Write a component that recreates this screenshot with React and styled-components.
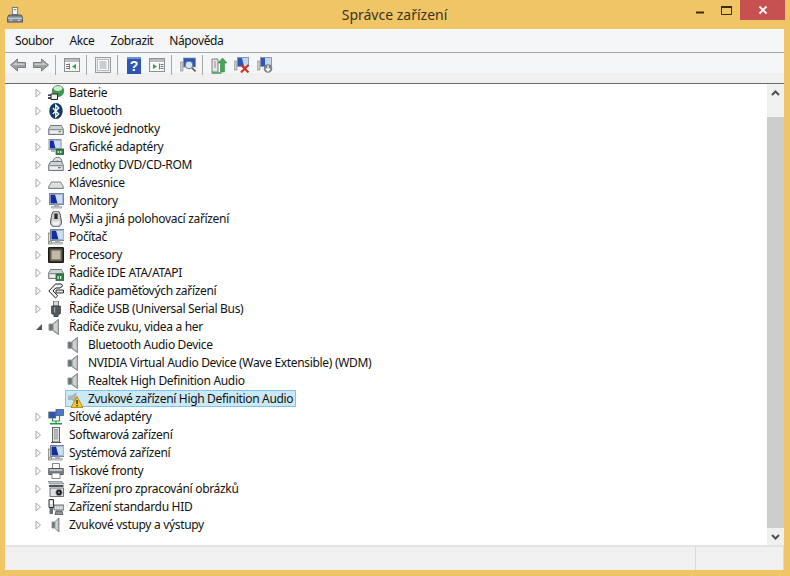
import React from "react";
import styled, { createGlobalStyle } from "styled-components";

const Global = createGlobalStyle`
  html, body { margin: 0; padding: 0; background: #f0c566; }
  * { box-sizing: border-box; }
`;

const Window = styled.div`
  width: 790px; height: 576px; background: #f0c566; display: flex; flex-direction: column;
  font-family: "Noto Sans", "Open Sans", sans-serif; font-size: 12px; color: #111; overflow: hidden;
`;
const TitleBar = styled.div`
  height: 29px; flex: none; display: flex; align-items: flex-start; padding: 0 5px 0 7px;
`;
const AppIcon = styled.div`width: 16px; height: 16px; margin-top: 7px; flex: none;`;
const Title = styled.div`
  flex: 1; text-align: center; font-size: 14px; line-height: 29px; color: #3c3320; padding-left: 79px;
`;
const WinButton = styled.div`
  flex: none; height: 20px; width: ${p => p.$w}px; background: ${p => p.$bg || "transparent"};
  display: flex; align-items: center; justify-content: center;
`;
const Body = styled.div`
  flex: 1; min-height: 0; margin: 0 6px 6px 5px; background: #f0f0f0; display: flex; flex-direction: column;
`;
const MenuBar = styled.div`
  height: 24px; flex: none; display: flex; align-items: center; padding: 0 10px; gap: 16px;
  background: #f5f6f7; border-bottom: 1px solid #a8a8a8; letter-spacing: -0.4px;
`;
const MenuItem = styled.span`line-height: 23px;`;
const Toolbar = styled.div`
  height: 31px; flex: none; display: flex; align-items: flex-start; padding: 3px 0 0 5px;
  background: linear-gradient(#f5f6f7 0 20px, #f0f0f0 20px);
  border-bottom: 1px solid #6a6a6a;
`;
const ToolIcon = styled.div`
  width: 16px; height: 18px; flex: none; margin-left: ${p => p.$ml || 0}px; display: flex; align-items: center;
`;
const ToolSep = styled.div`
  width: 1px; height: 20px; margin-top: -1px; background: #a9a9a9; flex: none; margin-left: ${p => p.$ml}px;
`;
const Content = styled.div`
  flex: 1; min-height: 0; display: flex; background: #fff; margin: 0 0 0 1px;
  border-bottom: 2px solid #e3e3e3;
`;
const Tree = styled.div`flex: 1; min-width: 0; display: flex; flex-direction: column;`;
const Row = styled.div`
  height: 18px; flex: none; display: flex; align-items: center; padding-left: ${p => p.$pad}px;
  white-space: nowrap;
`;
const Twisty = styled.div`width: 15px; height: 18px; flex: none; display: flex; align-items: center; justify-content: center; margin-right: 2px;`;
const NodeIcon = styled.div`width: 17px; height: 17px; flex: none; display: flex; align-items: center;`;
const Label = styled.div`
  margin-left: 3px; line-height: 16px; height: 17px; padding: 0 2px 0 1px; letter-spacing: -0.32px;
`;
const Selected = styled.div`
  display: flex; align-items: flex-start; height: 17px; align-self: flex-start; background: #cbe8f6; border: 1px solid #7fc4e4; padding-left: 1px;
`;
const Scrollbar = styled.div`
  width: 17px; flex: none; background: #f0f0f0; display: flex; flex-direction: column;
`;
const ScrollBtn = styled.div`height: 17px; flex: none; display: flex; align-items: center; justify-content: center;`;
const Track = styled.div`flex: 1; padding: 16px 0 0; display: flex;`;
const Thumb = styled.div`flex: 1; background: #cdcdcd;`;
const StatusBar = styled.div`height: 23px; flex: none; display: flex; background: #f0f0f0;`;
const StatusCell = styled.div`
  width: ${p => p.$w ? p.$w + "px" : "auto"}; flex: ${p => p.$w ? "none" : 1}; border-right: 1px solid #d9d9d9;
`;

const Svg = ({ s = 16, children }) => <svg width={s} height={s} viewBox={`0 0 ${s} ${s}`}>{children}</svg>;

const Speaker = () => <Svg>
  <path d="M1 5h3.500L10.500 .3v15.400L4.500 11.300H1z" fill="#a4a9a9" stroke="#6a7070" strokeWidth=".7"/>
  <path d="M1.500 5.500h3.200v5.300H1.500z" fill="#6a7074"/><path d="M6 5l3.500-2.700v11.400L6 11z" fill="#cdd1d1"/>
</Svg>;
const monitor = <>
  <rect x="1.500" y=".5" width="14" height="11" fill="#dfe4ea" stroke="#6f7a86" strokeWidth=".9"/>
  <path d="M2.500 1.500h12v9h-12z" fill="#12309a"/><path d="M7 1.500h7.500v9H9.500z" fill="#c9def4"/>
  <path d="M6 11.500h5v2H6z" fill="#aab0b6"/><path d="M3.500 13.500h10v1.600h-10z" fill="#cfd3d7" stroke="#7d8389" strokeWidth=".5"/>
</>;
const drive = <>
  <path d="M.7 8l2-3.500h10.600l2 3.500v5.500H.7z" fill="#cfd2d4" stroke="#666b6f" strokeWidth=".9"/>
  <path d="M1.500 8.500h13" stroke="#8b9094"/><path d="M2 10h12v2.500H2z" fill="#eceeef"/>
</>;
const icons = {
  battery: <Svg><ellipse cx="10" cy="6" rx="5.800" ry="5.500" fill="#3f9a50" stroke="#2d7b3f" strokeWidth=".7"/><ellipse cx="10" cy="3.500" rx="4.200" ry="2.400" fill="#d2ead3"/><path d="M3 9h6.500v5.500H3z" fill="#f0f0f0" stroke="#222" strokeWidth="1"/><path d="M0 10.200h3M0 13h3" stroke="#111" strokeWidth="1.300"/></Svg>,
  bt: <Svg><ellipse cx="8" cy="8" rx="6.700" ry="8" fill="#0f3a66"/><path d="M4.800 5l6 6-3 3V2l3 3-6 6" fill="none" stroke="#fff" strokeWidth="1.300"/></Svg>,
  disk: <Svg>{drive}<rect x="10.500" y="10" width="2.500" height="1.300" fill="#4e9a54"/></Svg>,
  gpu: <Svg><rect x="1" y="0.500" width="12" height="10" fill="#dfe4ea" stroke="#6f7a86" strokeWidth=".8"/><path d="M2 1.500h10v8H2z" fill="#12309a"/><path d="M5.500 1.500h6.500v8H7.500z" fill="#c9def4"/><path d="M3 11h4v2H3z" fill="#aab0b6"/><rect x="8" y="10" width="8" height="5.500" fill="#2f8248" stroke="#1e5732" strokeWidth=".7"/><path d="M9.500 12h1.400v2H9.500zM12 12h1.400v2H12z" fill="#d5ecd0"/></Svg>,
  dvd: <Svg><circle cx="9.500" cy="4.800" r="4.500" fill="#e0e3e6" stroke="#5f656b" strokeWidth=".9"/><circle cx="9.500" cy="4.800" r="1.200" fill="#fff" stroke="#5f656b" strokeWidth=".6"/>{drive}<rect x="10" y="10" width="3" height="1.300" fill="#7a8086"/></Svg>,
  kbd: <Svg><path d="M.7 11.500l2.800-4.500h9l2.800 4.500v2H.7z" fill="#c9cccf" stroke="#666b6f" strokeWidth=".8"/><path d="M3.500 8.300h9M2.800 9.800h10.400M2 11.300h12" stroke="#fff" strokeWidth=".9" strokeDasharray="1 .6"/></Svg>,
  mon: <Svg>{monitor}</Svg>,
  mouse: <Svg><path d="M8 0C3 0 3.800 5 2.700 10c-.7 3.500 1.300 6 5.300 6s6-2.500 5.300-6C12.200 5 13 0 8 0z" fill="#cfcfcf" stroke="#333" strokeWidth=".9"/><path d="M6.300 2.500h3.400v5.500H6.300z" fill="#2e2e2e"/><path d="M4.500 9c1 2 6 2 7 0v4c-2 1.800-5 1.800-7 0z" fill="#f1f1f1"/></Svg>,
  pc: <Svg><rect x=".3" y="4" width="3" height="11" fill="#e4e4d8" stroke="#6a6a5e" strokeWidth=".7"/><rect x="1.200" y="12" width="1.200" height="1.500" fill="#3f9a50"/><g transform="translate(1 0)">{monitor}</g></Svg>,
  cpu: <Svg><rect x=".5" y=".5" width="15" height="15" rx=".5" fill="#3a352e" stroke="#1a1815"/><rect x="2.500" y="2.500" width="11" height="11" fill="#8e8675"/><path d="M4 4h8v8H4z" fill="#c2bba9"/></Svg>,
  ide: <Svg>{drive}<rect x="8" y="9" width="8" height="6.500" fill="#2f8248" stroke="#1e5732" strokeWidth=".7"/><path d="M9.500 11h1.300v3H9.500zM12 11h1.300v3H12z" fill="#d5ecd0"/></Svg>,
  mem: <Svg><path d="M7.500 1L.8 8l6.700 7 2.300-2.200L5 8l2.800-3H12l2.800-2.200-1.500-1.800z" fill="#eceef0" stroke="#222" strokeWidth="1"/><path d="M8 7h7.500v3H8z" fill="#d9dcdf" stroke="#222" strokeWidth=".9"/></Svg>,
  usb: <Svg><path d="M5.500 0h5v5h-5z" fill="#d8d8d8" stroke="#444" strokeWidth=".7"/><path d="M3.500 5h9v7.500L10 14v2H6v-2l-2.500-1.500z" fill="#53585d" stroke="#33373b" strokeWidth=".7"/><path d="M6 6h1.200v5.500H6z" fill="#9da3a8"/></Svg>,
  speaker: <Speaker />,
  warn: <Svg><g opacity=".8"><path d="M1 3.500h3.500L9.500 .3v11L4.500 8H1z" fill="#a4a9a9"/></g><path d="M10 4.500L16 15.500H4z" fill="#f7c82a" stroke="#a77a10" strokeWidth=".8"/><path d="M9.400 8h1.300v4H9.400zM9.400 13h1.300v1.400H9.400z" fill="#222"/></Svg>,
  net: <Svg><rect x=".8" y="3" width="7" height="6" fill="#2a55b8" stroke="#4d5d70" strokeWidth=".8"/><rect x="8" y=".5" width="7.500" height="6" fill="#4b77cf" stroke="#4d5d70" strokeWidth=".8"/><path d="M4.500 9v3h7V6.500M8 12v2" fill="none" stroke="#2f934a" strokeWidth="1.200"/><path d="M2 14.700h12" stroke="#2f934a" strokeWidth="1.600"/></Svg>,
  soft: <Svg><rect x="4.500" y=".5" width="7" height="14.500" fill="#e4e4e4" stroke="#555" strokeWidth=".9"/><rect x="6.500" y="2.500" width="3" height="9.500" fill="#b8bdc1" stroke="#7a7a7a" strokeWidth=".5"/><path d="M3 15.500h10" stroke="#555"/></Svg>,
  sys: <Svg><rect x=".3" y="4" width="3" height="11" fill="#e4e4d8" stroke="#6a6a5e" strokeWidth=".7"/><rect x="1.200" y="12" width="1.200" height="1.500" fill="#3f9a50"/><g transform="translate(1 0)">{monitor}</g></Svg>,
  print: <Svg><path d="M4.500 .5h7v5h-7z" fill="#fafafa" stroke="#666" strokeWidth=".8"/><path d="M.7 5.500h14.600v6H.7z" fill="#7c8289" stroke="#3f4449" strokeWidth=".8"/><path d="M1.500 6h13v2h-13z" fill="#bfc3c6"/><path d="M4 10h8v5.500H4z" fill="#fff" stroke="#666" strokeWidth=".8"/></Svg>,
  scan: <Svg><path d="M0 .5h14l2 2.500H2z" fill="#bcc1c5" stroke="#6a6f74" strokeWidth=".6"/><path d="M1 4h14.500v2H1z" fill="#4f545a"/><rect x="2" y="7" width="13.500" height="8.500" fill="#dfe1e3" stroke="#555" strokeWidth=".8"/><circle cx="11" cy="11.500" r="3.200" fill="#1a1a1a" stroke="#999" strokeWidth=".8"/><circle cx="11" cy="11.500" r="1" fill="#8aa"/></Svg>,
  hid: <Svg><path d="M1 .5h4.500v8H1z" fill="#d5d8dc" stroke="#2f3337"/><path d="M2 2h2.500v3H2z" fill="#fff"/><path d="M1.500 9h3.500v6H1.500z" fill="#6a7075"/><path d="M6 6h10v5H6z" fill="#bcc0c3" stroke="#555" strokeWidth=".8"/><path d="M7 8h8M7 9.800h8" stroke="#fff" strokeDasharray="1 .6"/><path d="M8 12h6l1 3.500H7z" fill="#8d9398" stroke="#444" strokeWidth=".7"/></Svg>,
  sound: <Svg><path d="M4 5h2.500L11 1v14l-4.500-4H4z" fill="#a4a9a9" stroke="#6a7070" strokeWidth=".7"/><path d="M7.500 4.500l2.200-1.800v10.600L7.500 11.500z" fill="#d0d4d4"/><path d="M4.500 5.500h2.200v5H4.500z" fill="#6a7074"/></Svg>,
};

const items = [
  ["Baterie", "battery"], ["Bluetooth", "bt"], ["Diskové jednotky", "disk"], ["Grafické adaptéry", "gpu"],
  ["Jednotky DVD/CD-ROM", "dvd"], ["Klávesnice", "kbd"], ["Monitory", "mon"], ["Myši a jiná polohovací zařízení", "mouse"],
  ["Počítač", "pc"], ["Procesory", "cpu"], ["Řadiče IDE ATA/ATAPI", "ide"], ["Řadiče paměťových zařízení", "mem"],
  ["Řadiče USB (Universal Serial Bus)", "usb"], ["Řadiče zvuku, videa a her", "speaker", "open"],
  ["Bluetooth Audio Device", "speaker", "child"], ["NVIDIA Virtual Audio Device (Wave Extensible) (WDM)", "speaker", "child"],
  ["Realtek High Definition Audio", "speaker", "child"], ["Zvukové zařízení High Definition Audio", "warn", "sel"],
  ["Síťové adaptéry", "net"], ["Softwarová zařízení", "soft"], ["Systémová zařízení", "sys"], ["Tiskové fronty", "print"],
  ["Zařízení pro zpracování obrázků", "scan"], ["Zařízení standardu HID", "hid"], ["Zvukové vstupy a výstupy", "sound"],
];

const Closed = () => <svg width="7" height="10" viewBox="0 0 7 10"><path d="M1 1l4.500 4L1 9z" fill="#fff" stroke="#a6a6a6"/></svg>;
const Open = () => <svg width="8" height="8" viewBox="0 0 8 8"><path d="M7 1v6H1z" fill="#555"/></svg>;

const Back = ({ flip }) => <svg width="16" height="14" viewBox="0 0 16 14" style={flip ? { transform: "scaleX(-1)" } : undefined}>
  <path d="M.5 7L7.500 1v3.500h8v5h-8V13z" fill="#9da19f" stroke="#797d7b"/><path d="M2.500 7l4-3.300v1.800h8v1.500z" fill="#c9ccca"/></svg>;
const Pane = ({ right }) => <svg width="16" height="14" viewBox="0 0 16 14">
  <rect x=".5" y=".5" width="15" height="13" fill="#f7f7f7" stroke="#8d9193"/><path d="M1 1h14v3H1z" fill="#b9bdbf"/>
  {right ? <><path d="M10.500 5.500v6M11.500 6.500h3M11.500 8.500h3M11.500 10.500h3" stroke="#777"/><path d="M4 6l4 2.500L4 11z" fill="#3f9b50"/></>
    : <><path d="M5.500 5.500v6M2 6.500h3M2 8.500h3M2 10.500h3" stroke="#777"/><path d="M12 6L8 8.500l4 2.500z" fill="#3f9b50"/></>}
</svg>;
const Props = () => <svg width="16" height="16" viewBox="0 0 16 16"><rect x=".5" y=".5" width="15" height="15" fill="#ececec" stroke="#9a9d9f"/><rect x="2.500" y="2.500" width="11" height="11" fill="#fafafa" stroke="#b8bbbd"/><path d="M4.500 5h7M4.500 7h7M4.500 9h7M4.500 11h7" stroke="#9aa0a5"/></svg>;
const Help = () => <svg width="14" height="17" viewBox="0 0 14 17"><rect width="14" height="17" fill="#2f55b0"/><path d="M0 0h14v2H0z" fill="#6d8fd8"/><text x="7" y="14" textAnchor="middle" fontSize="14" fontWeight="700" fontFamily="Liberation Sans" fill="#fff">?</text></svg>;
const Scan = () => <svg width="16" height="16" viewBox="0 0 16 16"><rect x="0" y="5" width="3" height="9" fill="#c9cbc9" stroke="#777" strokeWidth=".5"/><rect x="3.500" y="1" width="12" height="9" fill="#2c55b8" stroke="#8a93a0" strokeWidth=".7"/><circle cx="9" cy="8" r="3.800" fill="#d7e5f3" stroke="#6e7c89"/><path d="M12 11l3.500 3.500" stroke="#555" strokeWidth="1.600"/></svg>;
const Update = () => <svg width="16" height="17" viewBox="0 0 16 17"><path d="M1 2h6v13H1z" fill="#e5e5e5" stroke="#666" strokeWidth=".8"/><path d="M3 4h2v7H3z" fill="#bbb"/><path d="M.5 16h10" stroke="#3f9b50" strokeWidth="1.500"/><path d="M11.500 1L16 6h-2.500v9h-4V6H7z" fill="#45a655" stroke="#2e7a3d" strokeWidth=".5"/></svg>;
const Remove = () => <svg width="16" height="16" viewBox="0 0 16 16"><rect x="0" y="4" width="3" height="9" fill="#c9cbc9" stroke="#777" strokeWidth=".5"/><rect x="3.500" y=".5" width="11" height="9" fill="#2c55b8" stroke="#8a93a0" strokeWidth=".7"/><path d="M8 1h6v8h-4z" fill="#c2d6ee"/><path d="M7 8l7.500 7.500M14.500 8L7 15.500" stroke="#d62a20" strokeWidth="2"/></svg>;
const Add = () => <svg width="16" height="16" viewBox="0 0 16 16"><rect x="0" y="4" width="3" height="9" fill="#c9cbc9" stroke="#777" strokeWidth=".5"/><rect x="3.500" y=".5" width="11" height="9" fill="#2c55b8" stroke="#8a93a0" strokeWidth=".7"/><path d="M8 1h6v7H8z" fill="#c2d6ee"/><circle cx="11" cy="11.500" r="4.300" fill="#7a8085"/><path d="M11 8.500v5M8.800 11.500L11 14l2.200-2.500" stroke="#fff" strokeWidth="1.300" fill="none"/></svg>;
const Tray = () => <svg width="16" height="16" viewBox="0 0 18 18"><rect x="6" y=".5" width="6" height="8" fill="#f4f4f4" stroke="#6a6f74"/><path d="M7.500 3h3" stroke="#6a6f74"/><path d="M2 9h14l1.500 3v5H.5v-5z" fill="#7f8a96" stroke="#48505a"/><path d="M1 12h16v1.500H1z" fill="#c5ccd3"/><path d="M3 15h3M12 15h3" stroke="#e5e7e9"/></svg>;

export default function App() {
  return (
    <Window>
      <Global />
      <TitleBar>
        <AppIcon><Tray /></AppIcon>
        <Title>Správce zařízení</Title>
        <WinButton $w={26}><svg width="10" height="12" viewBox="0 0 10 12"><path d="M1 9.500h8v2H1z" transform="translate(0 -2)" fill="#3a2c10"/></svg></WinButton>
        <WinButton $w={27}><svg width="11" height="9" viewBox="0 0 11 9"><path d="M.5 1.500h10v7H.5z" fill="none" stroke="#3a2c10"/><path d="M0 0h11v2H0z" fill="#3a2c10"/></svg></WinButton>
        <WinButton $w={45} $bg="#c75050"><svg width="10" height="10" viewBox="0 0 10 10"><path d="M1.500 1.500l7 7M8.500 1.500l-7 7" stroke="#fff" strokeWidth="1.800"/></svg></WinButton>
      </TitleBar>
      <Body>
        <MenuBar>
          <MenuItem>Soubor</MenuItem><MenuItem>Akce</MenuItem><MenuItem>Zobrazit</MenuItem><MenuItem>Nápověda</MenuItem>
        </MenuBar>
        <Toolbar>
          <ToolIcon><Back /></ToolIcon>
          <ToolIcon $ml={7}><Back flip /></ToolIcon>
          <ToolSep $ml={6} />
          <ToolIcon $ml={8}><Pane /></ToolIcon>
          <ToolSep $ml={6} />
          <ToolIcon $ml={8}><Props /></ToolIcon>
          <ToolSep $ml={6} />
          <ToolIcon $ml={9}><Help /></ToolIcon>
          <ToolIcon $ml={6}><Pane right /></ToolIcon>
          <ToolSep $ml={6} />
          <ToolIcon $ml={8}><Scan /></ToolIcon>
          <ToolSep $ml={6} />
          <ToolIcon $ml={8}><Update /></ToolIcon>
          <ToolIcon $ml={7}><Remove /></ToolIcon>
          <ToolIcon $ml={7}><Add /></ToolIcon>
        </Toolbar>
        <Content>
          <Tree>
            {items.map(([t, ic, kind]) => {
              const child = kind === "child" || kind === "sel";
              return (
                <Row key={t} $pad={kind === "sel" ? 59 : child ? 61 : 25}>
                  {!child && <Twisty>{kind === "open" ? <Open /> : <Closed />}</Twisty>}
                  {kind === "sel"
                    ? <Selected><NodeIcon>{icons[ic]}</NodeIcon><Label>{t}</Label></Selected>
                    : <><NodeIcon>{icons[ic]}</NodeIcon><Label>{t}</Label></>}
                </Row>
              );
            })}
          </Tree>
          <Scrollbar>
            <ScrollBtn><svg width="9" height="6" viewBox="0 0 9 6"><path d="M1 5l3.500-3.500L8 5" fill="none" stroke="#505050" strokeWidth="2"/></svg></ScrollBtn>
            <Track><Thumb /></Track>
            <ScrollBtn><svg width="9" height="6" viewBox="0 0 9 6"><path d="M1 1l3.500 3.500L8 1" fill="none" stroke="#505050" strokeWidth="2"/></svg></ScrollBtn>
          </Scrollbar>
        </Content>
        <StatusBar>
          <StatusCell $w={691} />
          <StatusCell />
        </StatusBar>
      </Body>
    </Window>
  );
}
